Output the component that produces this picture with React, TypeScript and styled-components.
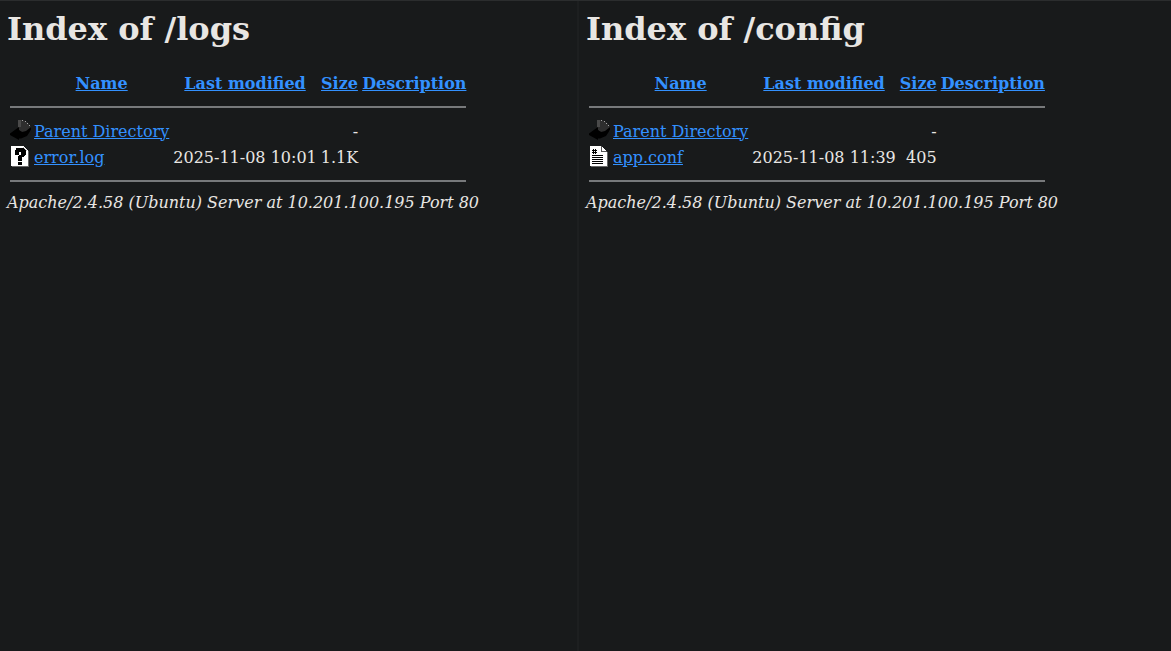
import React from "react";
import styled, { createGlobalStyle } from "styled-components";

const Global = createGlobalStyle`
  html, body { margin: 0; padding: 0; height: 100%; background: #181a1b; overflow: hidden; }
  #root { height: 100%; }
`;
const Page = styled.div`
  display: flex;
  height: 651px;
  border-top: 1px solid #2b2d2e;
  box-sizing: border-box;
`;
const Panel = styled.section<{ $w: number }>`
  width: ${(p) => p.$w}px;
  flex: none;
  box-sizing: border-box;
  padding: 0 0 0 7px;
  background: #181a1b;
  color: #e8e6e3;
  font-family: "DejaVu Serif", serif;
  font-size: 16px;
  & + & { border-left: 2px solid #1d1f20; }
`;
const Title = styled.h1`
  font-size: 32px;
  font-weight: 700;
  line-height: 38px;
  margin: 9px 0 23px;
`;
const Table = styled.table`
  border-spacing: 2px;
  border-collapse: separate;
  font-size: 16px;
`;
const Cell = styled.td<{ $right?: boolean }>`
  padding: 1px;
  text-align: ${(p) => (p.$right ? "right" : "left")};
  vertical-align: middle;
  line-height: 19px;
`;
const Head = styled.th`
  padding: 1px;
  font-weight: 700;
  text-align: center;
  line-height: 20px;
`;
const Link = styled.a`
  color: #3391ff;
  text-decoration: underline;
`;
const Rule = styled.hr`
  border: 0;
  height: 2px;
  background: #77797b;
  margin: 8px 0;
`;
const Icon = styled.svg`
  display: block;
  width: 20px;
  height: 22px;
  overflow: visible;
`;
const Footer = styled.address`
  font-style: italic;
  margin-top: 0;
  line-height: 19px;
`;

const BackIcon = () => (
  <Icon viewBox="0 0 20 22">
    <path d="M8 0h5l4 2 2 2 2 3v4l-6 2-5-2-2-2z" fill="#2e2e2e" />
    <path d="M8 0h3v7H8z" fill="#4a4a4a" />
    <path d="M12 0h1v1h-1zM15 1h1v1h-1zM17 3h1v1h-1zM19 5h1v1h-1zM20 8h1v1h-1zM18 11h1v1h-1zM15 13h1v1h-1z" fill="#a0a0a0" />
    <path d="M0 13.5L9 7v3l3 2 4-1 5-4v3l-4 6-6 2.5H9V20L0 15z" fill="#000" />
  </Icon>
);
const UnknownIcon = () => (
  <Icon viewBox="0 0 20 22" shapeRendering="crispEdges">
    <path d="M1 0h12l5 5v15H1z" fill="#fff" />
    <path d="M13 1l4 4h-4z" fill="#c8c8c8" />
    <path d="M18 5h1v16H2v-1h16z" fill="#666" />
    <path d="M6 2h8v1h1v1h1v5h-1v1h-1v1h-2v4H8v-5h1V9h2V6H9v3H5V4h1zM8 16h4v3H8z" fill="#000" />
  </Icon>
);
const TextIcon = () => (
  <Icon viewBox="0 0 20 22" shapeRendering="crispEdges">
    <path d="M1 0h11l6 6v14H1z" fill="#fff" />
    <path d="M12 0h1v5h5v1h-6z" fill="#555" />
    <path d="M18 6h1v15H2v-1h16z" fill="#666" />
    <path d="M4 3h1v5H4zM6 3h1v5H6zM3 4h5v1H3zM3 6h5v1H3zM3 9h11v1H3zM3 11h11v1H3zM3 13h11v1H3zM3 15h11v1H3zM3 17h11v1H3z" fill="#000" />
  </Icon>
);

type Listing = {
  path: string;
  width: number;
  file: string;
  fileIcon: React.ReactNode;
  date: string;
  size: string;
};

const Index = ({ path, width, file, fileIcon, date, size }: Listing) => (
  <Panel $w={width}>
    <Title>Index of {path}</Title>
    <Table>
      <tbody>
        <tr>
          <Head />
          <Head><Link href="#">Name</Link></Head>
          <Head><Link href="#">Last modified</Link></Head>
          <Head><Link href="#">Size</Link></Head>
          <Head><Link href="#">Description</Link></Head>
        </tr>
        <tr><Head colSpan={5}><Rule /></Head></tr>
        <tr>
          <Cell><BackIcon /></Cell>
          <Cell><Link href="#">Parent Directory</Link></Cell>
          <Cell />
          <Cell $right>-</Cell>
          <Cell />
        </tr>
        <tr>
          <Cell>{fileIcon}</Cell>
          <Cell><Link href="#">{file}</Link></Cell>
          <Cell>{date}</Cell>
          <Cell $right>{size}</Cell>
          <Cell />
        </tr>
        <tr><Head colSpan={5}><Rule /></Head></tr>
      </tbody>
    </Table>
    <Footer>Apache/2.4.58 (Ubuntu) Server at 10.201.100.195 Port 80</Footer>
  </Panel>
);

export default function App() {
  return (
    <>
      <Global />
      <Page>
        <Index path="/logs" width={577} file="error.log" fileIcon={<UnknownIcon />} date="2025-11-08 10:01" size="1.1K" />
        <Index path="/config" width={594} file="app.conf" fileIcon={<TextIcon />} date="2025-11-08 11:39" size="405" />
      </Page>
    </>
  );
}
